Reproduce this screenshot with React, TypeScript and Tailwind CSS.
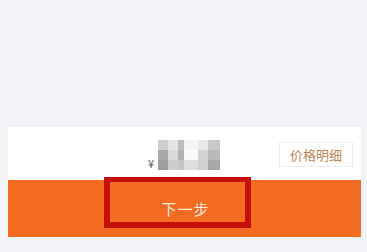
const mosaic: string[][] = [
  ['#cfcfcf', '#e4e4e4', '#bdbdbd', '#f4f4f4', '#e9e9e9', '#c9c9c9'],
  ['#a9a9a9', '#d9d9d9', '#b2b2b2', '#fafafa', '#d4d4d4', '#b9b9b9'],
  ['#9e9e9e', '#cdcdcd', '#c4c4c4', '#dedede', '#d0d0d0', '#a8a8a8'],
];
const colW = [10, 10, 6, 14, 10, 12];

export default function App() {
  return (
    <div
      className="relative flex h-[252px] w-[367px] flex-col bg-[#f1f3f6]"
      style={{ fontFamily: '"Noto Sans CJK SC", "Noto Sans", sans-serif' }}
    >
      <div className="h-[127px]" />
      <div className="ml-2 flex h-[53px] w-[353px] items-center bg-white">
        {/* blurred price */}
        <div className="ml-[140px] mt-[2px] flex items-end gap-[4px]">
          <span className="mb-[1px] text-[11px] leading-none text-[#555]">¥</span>
          <div className="flex flex-col">
            {mosaic.map((row, r) => (
              <div key={r} className="flex h-[10px]">
                {row.map((c, i) => (
                  <div key={i} className="h-full" style={{ width: colW[i], background: c }} />
                ))}
              </div>
            ))}
          </div>
        </div>
        <button className="ml-auto mr-2 mt-[2px] flex h-[25px] w-[74px] items-center justify-center border border-[#eeeeee] text-[13px] text-[#bb8558]">
          价格明细
        </button>
      </div>
      <div className="ml-2 flex h-[57px] w-[353px] items-center justify-center bg-[#f36c22] pl-[2px] pt-[2px]">
        <span className="text-[15px] tracking-[1px] text-[#fde8dc]">下一步</span>
      </div>

      {/* red annotation box */}
      <div className="absolute left-[104px] top-[177px] h-[51px] w-[147px] border-[6px] border-t-[5px] border-[#c40f0a]" />
    </div>
  );
}
